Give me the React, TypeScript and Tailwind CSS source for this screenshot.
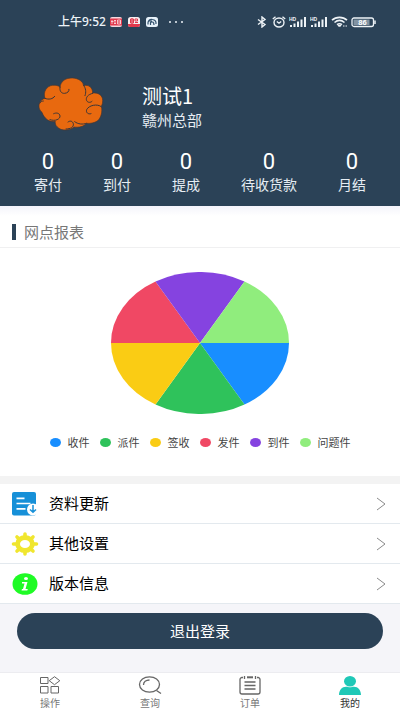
import React from "react";

const stats = [
  { label: "寄付", value: 0 },
  { label: "到付", value: 0 },
  { label: "提成", value: 0 },
  { label: "待收货款", value: 0 },
  { label: "月结", value: 0 },
];

const slices = [
  { label: "收件", color: "#188eff", path: "M89 71H178A89 71 0 0 1 133.5 132.5Z" },
  { label: "派件", color: "#2fc25b", path: "M89 71L133.5 132.5A89 71 0 0 1 44.5 132.5Z" },
  { label: "签收", color: "#facc14", path: "M89 71L44.5 132.5A89 71 0 0 1 0 71Z" },
  { label: "发件", color: "#f04864", path: "M89 71H0A89 71 0 0 1 44.5 9.5Z" },
  { label: "到件", color: "#8543e0", path: "M89 71L44.5 9.5A89 71 0 0 1 133.5 9.5Z" },
  { label: "问题件", color: "#90ed7d", path: "M89 71L133.5 9.5A89 71 0 0 1 178 71Z" },
];

function Signal() {
  return (
    <svg className="h-3 w-[18px]" viewBox="0 0 18 12" fill="#eef3f7">
      <text x="0" y="4.6" fontSize="5" fontWeight="700" fontFamily="Liberation Sans, sans-serif">HD</text>
      <rect x="1" y="9" width="2" height="2" />
      <rect x="4.5" y="7.5" width="2" height="3.5" />
      <rect x="8" y="5.5" width="2" height="5.5" />
      <rect x="11.5" y="3.5" width="2" height="7.5" />
      <rect x="15" y="1" width="2" height="10" />
    </svg>
  );
}

function StatusBar() {
  return (
    <div className="flex h-11 items-center justify-between pl-[58px] pr-[23px] text-[#eef3f7]">
      <div className="flex items-center">
        <span className="font-['Noto_Sans','Noto_Sans_CJK_SC',sans-serif] text-xs font-medium">上午9:52</span>
        <svg className="ml-1 h-[10px] w-3" viewBox="0 0 12 10">
          <rect width="12" height="10" rx="2" fill="#f4d9df" />
          <rect y="1.5" width="12" height="7" fill="#e2384c" />
          <path d="M2 3v4M1 4.5h2.500M4 3.500h2M4 6.500h2M5 3v4M7.500 3v4h3V3zM8 5h3" stroke="#fbe5e8" strokeWidth=".8" fill="none" />
        </svg>
        <svg className="ml-1.5 h-[10px] w-3" viewBox="0 0 12 10">
          <rect width="12" height="10" rx="2.500" fill="#f7eef0" />
          <path d="M0 7h12v1a2 2 0 0 1-2 2H2a2 2 0 0 1-2-2z" fill="#e2384c" />
          <path d="M2.500 2h3v4h-3zM7 2h2.500v2H7zM7 5.500h3M4 1v6M2.500 4h3" stroke="#e2384c" fill="none" />
        </svg>
        <svg className="ml-1.5 h-[10px] w-3" viewBox="0 0 12 10">
          <rect width="12" height="10" rx="2.500" fill="#e8f2fa" />
          <path d="M2 7.500C1.500 4 3.500 2 6.500 2.500c2.500.3 3.800 2 3.500 4.500M4.500 8V5.500C6 4 8 5 8 8M3 4h3" stroke="#34536e" strokeWidth="1.200" fill="none" />
        </svg>
        <svg className="ml-[10px] h-1 w-4" viewBox="0 0 16 4" fill="currentColor">
          <circle cx="2" cy="2" r="1" /><circle cx="8" cy="2" r="1" /><circle cx="14" cy="2" r="1" />
        </svg>
      </div>
      <div className="flex items-center gap-[3px]">
        <svg className="mr-0.5 h-3 w-[10px]" viewBox="0 0 10 12" fill="none" stroke="currentColor" strokeWidth="1.400">
          <path d="M1 3.500l7 5L5 11V1l3 2.500-7 5" />
        </svg>
        <svg className="h-3 w-[14px]" viewBox="0 0 14 12" fill="none" stroke="currentColor" strokeWidth="1.400">
          <ellipse cx="7" cy="6.500" rx="5" ry="4.500" />
          <path d="M4.800 5.500L7 7.200l2.200-1.700M.8 3L3.500.8M13.200 3L10.500.8" />
        </svg>
        <Signal />
        <Signal />
        <svg className="h-3 w-[17px]" viewBox="0 0 17 12" fill="none" stroke="currentColor" strokeWidth="1.600">
          <path d="M1 4.200C5 .4 12 .4 16 4.200M3.500 6.500c3-2.600 7-2.600 10 0M6 8.700c1.500-1.200 3.500-1.200 5 0" />
          <path d="M7 9.500h3L8.500 11zM12 10h1.500M14.500 10H16" strokeWidth="1" />
        </svg>
        <svg className="h-3 w-[26px]" viewBox="0 0 26 12">
          <rect x="1" y="2" width="21.500" height="8.500" rx="2" fill="none" stroke="#eef3f7" strokeWidth="1.300" />
          <rect x="2.500" y="3.500" width="16" height="5.500" fill="#8293a2" />
          <path d="M24 4.500v3.500" stroke="#eef3f7" strokeWidth="1.500" />
          <text x="11.500" y="9" textAnchor="middle" fontSize="7.500" fontWeight="700" fontFamily="Liberation Sans, sans-serif" fill="#fff">86</text>
        </svg>
      </div>
    </div>
  );
}

function Cloud() {
  return (
    <svg className="h-[54px] w-[66px]" viewBox="10 14 198 162" fill="none" strokeLinecap="round">
      <path
        fill="#e8690f"
        stroke="#48352f"
        strokeWidth="2"
        d="M76 44C78 26 94 16 114 17C132 18 144 27 148 40C162 36 174 46 174 62C192 60 204 70 204 84C204 92 203 96 200 102C204 116 200 136 188 146C178 152 168 154 155 153C148 163 132 166 118 164C108 174 80 178 68 164C62 158 61 152 62 147C44 151 29 139 22 120C12 112 11 98 15 92C18 84 24 80 31 78C24 60 36 40 54 39C64 38 72 40 76 44Z"
      />
      <g stroke="#3b3638" strokeWidth="3">
        <path d="M76 44C74 56 80 64 90 63C99 62 104 57 103 51" />
        <path d="M146 38C154 48 155 60 151 70" />
        <path d="M31 78C42 83 55 80 60 72" />
        <path d="M174 63C160 66 152 76 156 85C160 92 168 91 172 87" />
        <path d="M16 92C18 88 22 86 26 86" />
        <path d="M200 103C188 93 162 99 156 112C153 121 161 127 169 124" />
        <path d="M46 142C62 148 77 140 76 131C75 122 65 120 57 124" />
        <path d="M94 170C108 170 118 164 116 154C114 146 106 144 100 149" />
        <path d="M120 148C130 156 144 157 155 153" />
      </g>
    </svg>
  );
}

function UpdateIcon() {
  return (
    <svg className="h-6 w-[26px]" viewBox="0 0 26 24" fill="none">
      <rect width="24" height="23.500" rx="2" fill="#1790d8" />
      <path d="M4.500 6.300h8M4.500 11.500h14M4.500 16.800h9" stroke="#fff" strokeWidth="1.700" />
      <ellipse cx="21" cy="17.500" rx="6" ry="6" fill="#fff" />
      <path d="M21 13v7M18 17.500l3 2.800 3-2.800" stroke="#1790d8" strokeWidth="1.500" />
    </svg>
  );
}

function GearIcon() {
  return (
    <svg className="h-6 w-[28px]" viewBox="0 0 28 24">
      <g fill="none" stroke="#f0e62e" strokeLinecap="round">
        <ellipse cx="14" cy="12" rx="7.400" ry="6.500" strokeWidth="4.800" />
        <path d="M14 2v2M14 20v2M2.500 12H5M23 12h2.500M6 5l2 1.800M20 17.200l2 1.800M22 5l-2 1.800M8 17.200L6 19" strokeWidth="3.600" />
      </g>
    </svg>
  );
}

function InfoIcon() {
  return (
    <svg className="h-[22px] w-[26px]" viewBox="0 0 26 22">
      <ellipse cx="13" cy="11" rx="12.500" ry="10.800" fill="#1ffb25" />
      <ellipse cx="14" cy="5.500" rx="2" ry="1.600" fill="#fff" />
      <path d="M10 9h5.500l-2 7h2.300l-.5 1.500H9.500L10 16h1l1.500-5.500H10z" fill="#fff" />
    </svg>
  );
}

const rows = [
  { label: "资料更新", icon: <UpdateIcon /> },
  { label: "其他设置", icon: <GearIcon /> },
  { label: "版本信息", icon: <InfoIcon /> },
];

const tabs = [
  {
    label: "操作",
    icon: (
      <svg className="h-[18px] w-[22px]" viewBox="0 0 22 18" fill="none" stroke="#666" strokeWidth="1">
        <path d="M1.500 1.500h7.500v6H1.500zM1.500 10.500h7.500v6.500H1.500zM12 10.500h7.500v6.500H12zM15.500.7l5.300 4-5.300 4-5.300-4z" />
      </svg>
    ),
  },
  {
    label: "查询",
    icon: (
      <svg className="h-[18px] w-[24px]" viewBox="0 0 24 18" fill="none" stroke="#666" strokeWidth="1.300">
        <ellipse cx="11.500" cy="8.500" rx="10" ry="7.700" />
        <path d="M18.500 14.500l4.500 3M5.500 9c0-3 2.500-5 6-5" />
      </svg>
    ),
  },
  {
    label: "订单",
    icon: (
      <svg className="h-[19px] w-[22px]" viewBox="0 0 22 19" fill="none" stroke="#666" strokeWidth="1.300">
        <path d="M4 1.500H3a2 2 0 0 0-2 2v12.500a2 2 0 0 0 2 2h16a2 2 0 0 0 2-2V3.500a2 2 0 0 0-2-2h-1M5.500 6h11M5.500 9.500h11M5.500 13h11" />
        <path d="M5.500 0v3M16.500 0v3" />
        <path d="M8 1.300h6" strokeWidth="2" />
      </svg>
    ),
  },
  {
    label: "我的",
    active: true,
    icon: (
      <svg className="h-[19px] w-[22px]" viewBox="0 0 22 19" fill="#1fc8b7">
        <ellipse cx="11" cy="5.200" rx="6" ry="5.200" />
        <path d="M0 19c0-5 3-8.300 7-8.300 1.500 0 2.500.6 4 .6s2.500-.6 4-.6c4 0 7 3.300 7 8.300z" />
      </svg>
    ),
  },
];

export default function App() {
  return (
    <div className="flex min-h-screen flex-col bg-[#f5f5f9] font-['Noto_Sans_CJK_SC','Noto_Sans',sans-serif] text-[#222]">
      <header className="bg-[#2b4257] pb-3 text-white">
        <StatusBar />
        <div className="flex items-center px-[38px] pt-8">
          <Cloud />
          <div className="ml-[38px] pt-2">
            <h1 className="text-xl leading-6">测试1</h1>
            <p className="text-[15px] leading-6 text-[#e6edf3]">赣州总部</p>
          </div>
        </div>
        <dl className="mt-[18px] flex justify-between px-[34px]">
          {stats.map((s) => (
            <div key={s.label} className="flex flex-col-reverse items-center">
              <dt className="text-sm leading-5 text-[#e6edf3]">{s.label}</dt>
              <dd className="font-[Roboto,sans-serif] text-[22px] leading-6">{s.value}</dd>
            </div>
          ))}
        </dl>
      </header>

      <section className="border-b-8 border-[#f3f3f3] bg-white">
        <div className="h-2.5 bg-linear-to-b from-[#f4f4fb] to-white" />
        <div className="flex h-8 items-center border-b border-[#f0f0f1] px-3">
          <span className="h-4 w-1 bg-[#2b4257]" />
          <h2 className="ml-2 text-[15px] leading-5 text-[#777]">网点报表</h2>
        </div>
        <div className="flex flex-col items-center pt-6">
          <svg className="h-[142px] w-[178px]" viewBox="0 0 178 142" role="img" aria-label="网点报表">
            {slices.map((s) => (
              <path key={s.label} d={s.path} fill={s.color} />
            ))}
          </svg>
          <ul className="mt-5 flex gap-2.5 pb-[26px] text-[11px] leading-4 text-[#444]">
            {slices.map((s) => (
              <li key={s.label} className="flex items-center gap-[7px]">
                <span className="h-[9px] w-[11px] rounded-[50%]" style={{ backgroundColor: s.color }} />
                {s.label}
              </li>
            ))}
          </ul>
        </div>
      </section>

      <ul className="bg-white">
        {rows.map((r) => (
          <li key={r.label} className="flex h-10 border-b border-[#e3e9ee]">
            <button type="button" className="flex w-full items-center pl-[11px] pr-[14px] text-left">
              <span className="flex w-7 justify-center">{r.icon}</span>
              <span className="ml-[10px] flex-1 text-[15px] text-black">{r.label}</span>
              <svg className="h-[14px] w-[10px]" viewBox="0 0 10 14" fill="none" stroke="#8a8a8a">
                <path d="M1 1l8 6-8 6" />
              </svg>
            </button>
          </li>
        ))}
      </ul>

      <div className="px-[17px] pt-[9px]">
        <button type="button" className="h-9 w-full rounded-full bg-[#2b4257] text-[15px] text-white">退出登录</button>
      </div>

      <nav className="mt-auto flex border-t border-[#ececf0] bg-white pb-px pt-0.5">
        {tabs.map((t) => (
          <button key={t.label} type="button" className="flex flex-1 flex-col items-center gap-px">
            <span className="flex h-5 items-center">{t.icon}</span>
            <span className={t.active ? "text-[10px] leading-[14px] text-[#333]" : "text-[10px] leading-[14px] text-[#777]"}>{t.label}</span>
          </button>
        ))}
      </nav>
    </div>
  );
}
